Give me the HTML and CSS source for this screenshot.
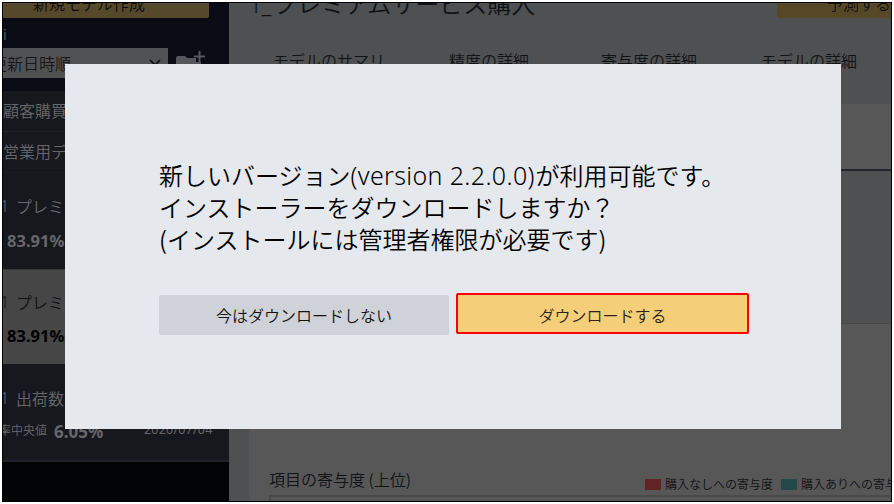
FILE: index.html
```html
<!DOCTYPE html>
<html lang="ja">
<head>
<meta charset="utf-8">
<title>アップデート</title>
<link rel="stylesheet" href="styles.css">
</head>
<body>
<div class="frame">
  <aside class="sidebar">
    <div class="tools">
      <div class="create">新規モデル作成</div>
      <div class="count">i</div>
      <div class="sort">
        <div class="select"><span class="select-label">更新日時順</span>
          <svg class="chevron" width="12" height="8" viewBox="0 0 12 8"><path d="M1 1l5 5 5-5" fill="none" stroke="#0b0c0e" stroke-width="1.7"/></svg>
        </div>
        <svg class="folder" width="30" height="28" viewBox="0 0 30 28"><path d="M0 7q0-2 2-2h7l2 2h9v4h5v15H0z" fill="#55575a"/><path d="M23.500 0v12M18 5.500h11" stroke="#55575a" stroke-width="2"/></svg>
      </div>
    </div>
    <div class="folder-row">顧客購買</div>
    <div class="folder-row second">営業用デ</div>
    <div class="model">
      <div class="name"><span class="num">1</span>プレミ</div>
      <div class="score">83.91%</div>
    </div>
    <div class="model selected">
      <div class="name"><span class="num">1</span>プレミ</div>
      <div class="score">83.91%</div>
    </div>
    <div class="model last">
      <div class="name"><span class="num">1</span>出荷数</div>
      <div class="result"><span class="metric">率中央値</span><b class="value">6.05%</b><span class="date">2020/07/04</span></div>
    </div>
  </aside>
  <main class="main">
    <header class="head">
      <h1 class="title"><span class="prefix">1_</span>プレミアムサービス購入</h1>
      <div class="predict">予測する</div>
    </header>
    <nav class="tabs"><span>モデルのサマリ</span><span>精度の詳細</span><span class="wide">寄与度の詳細</span><span>モデルの詳細</span></nav>
    <section class="panel">
      <div class="summary"></div>
      <div class="contrib">
        <span class="heading">項目の寄与度 (上位)</span>
        <span class="legend"><i class="chip red"></i>購入なしへの寄与度<i class="chip teal"></i>購入ありへの寄与度</span>
      </div>
      <div class="chart"></div>
    </section>
  </main>
</div>
<div class="modal">
  <p class="message"><span>新しいバージョン<span class="version">(version 2.2.0.0)</span>が利用可能です。</span><span>インストーラーをダウンロードしますか？</span><span>(インストールには管理者権限が必要です)</span></p>
  <div class="actions">
    <div class="btn">今はダウンロードしない</div>
    <div class="btn primary">ダウンロードする</div>
  </div>
</div>
</body>
</html>
```
FILE: styles.css
```css
* { box-sizing: border-box; }
body {
  margin: 0;
  width: 894px;
  height: 504px;
  padding: 2px;
  overflow: hidden;
  background: #fff;
  font-family: "Noto Sans CJK JP", sans-serif;
  font-size: 16px;
  font-weight: 350;
  white-space: nowrap;
}
.frame {
  display: flex;
  width: 890px;
  height: 500px;
  border: 1px solid #000;
  overflow: hidden;
}
.sidebar {
  flex: none;
  width: 226px;
  overflow: hidden;
  background: #020304;
  color: #66676b;
}
.tools { height: 88px; background: #090c14; }
.create {
  width: 206px;
  height: 15px;
  padding-left: 30px;
  line-height: 0;
  border-radius: 0 0 2px 0;
  background: #56482b;
  color: #0b0b0b;
}
.count { height: 30px; padding: 4px 0 0 0; font-size: 14px; line-height: 24px; color: #5c5d60; }
.sort { display: flex; }
.select {
  display: flex;
  justify-content: space-between;
  width: 165px;
  height: 30px;
  background: #505153;
  color: #16171a;
  line-height: 30px;
}
.select-label { margin-left: -12px; }
.chevron { margin: 11px 7px 0 0; }
.folder { margin: 3px 0 0 8px; }
.folder-row {
  height: 41px;
  border-bottom: 1px solid #202127;
  background: #17181d;
  line-height: 39px;
}
.second { border-color: #1b1c22; }
.model { height: 96px; padding-top: 21px; background: #17181d; }
.name { display: flex; height: 24px; line-height: 24px; }
.num { width: 13px; margin-left: -3px; margin-right: 3px; font-family: "Noto Sans", sans-serif; }
.score {
  height: 30px;
  margin-top: 7px;
  padding-left: 4px;
  font: 700 16.5px/32px "Noto Sans", sans-serif;
}
.selected { height: 95px; padding-top: 20px; background: #464646; color: #111; border-top: 1px solid #3b3b3d; }
.selected .score { margin-top: 6px; color: #000; }
.last { height: 98px; padding-top: 22px; border-bottom: 2px solid #20222a; }
.result { display: flex; align-items: center; height: 42px; font-size: 12px; }
.metric { margin-left: -4px; padding-bottom: 4px; }
.value { width: 90px; margin-left: 7px; padding-top: 1px; font: 700 17px/24px "Noto Sans", sans-serif; }
.date { padding-bottom: 2px; font: 400 12.5px/20px "Noto Sans", sans-serif; letter-spacing: .2px; }
.main { flex: none; width: 662px; overflow: hidden; background: #4e5052; color: #111214; }
.head { display: flex; justify-content: space-between; height: 38px; }
.title { height: 30px; margin: -3px 0 0 20px; font-size: 24px; font-weight: 350; line-height: 6px; }
.prefix { display: inline-block; width: 24px; font-family: "Noto Sans", sans-serif; font-size: 23px; letter-spacing: -.5px; }
.predict {
  width: 114px;
  height: 15px;
  padding-left: 50px;
  line-height: 0;
  background: #564827;
}
.tabs { display: flex; gap: 64px; height: 63px; padding-left: 44px; line-height: 38px; }
.wide { margin-left: 8px; }
.panel { height: 397px; margin-left: 20px; background: #575757; overflow: hidden; }
.summary {
  height: 155px;
  margin-top: 65px;
  border-top: 2px solid #25262d;
  border-bottom: 1px solid #474747;
  background: #4e5052;
}
.contrib { display: flex; height: 171px; padding: 143px 0 0 20px; line-height: 24px; }
.heading { flex: none; width: 376px; }
.legend { display: flex; flex: none; align-items: center; font-size: 12px; padding-top: 6px; }
.chip { width: 16px; height: 11px; margin-right: 4px; }
.red { background: #602426; }
.teal { margin-left: 8px; background: #25484b; }
.chart { height: 20px; margin-left: 20px; border: 2px solid #4a4a4a; border-right: 0; }
.modal {
  position: absolute;
  left: 65px;
  top: 64px;
  width: 776px;
  height: 365px;
  padding: 95px 92px 0 94px;
  background: #e5e9ee;
  color: #000;
}
.message { display: flex; flex-direction: column; margin: 0; font-size: 24px; line-height: 32px; }
.message > span { height: 32px; }
.version { display: inline-block; width: 185px; font-family: "Noto Sans", sans-serif; font-size: 25px; line-height: 20px; letter-spacing: .35px; }
.actions { display: flex; gap: 7px; align-items: flex-start; margin-top: 38px; }
.btn {
  width: 290px;
  height: 40px;
  margin-top: 2px;
  border-radius: 2px;
  background: #cfd2d9;
  color: #111;
  line-height: 41px;
  text-align: center;
}
.primary {
  width: 293px;
  height: 41px;
  margin-top: 0;
  border: 2px solid #f00;
  background: #f4ce79;
  color: #2a2417;
}
```
